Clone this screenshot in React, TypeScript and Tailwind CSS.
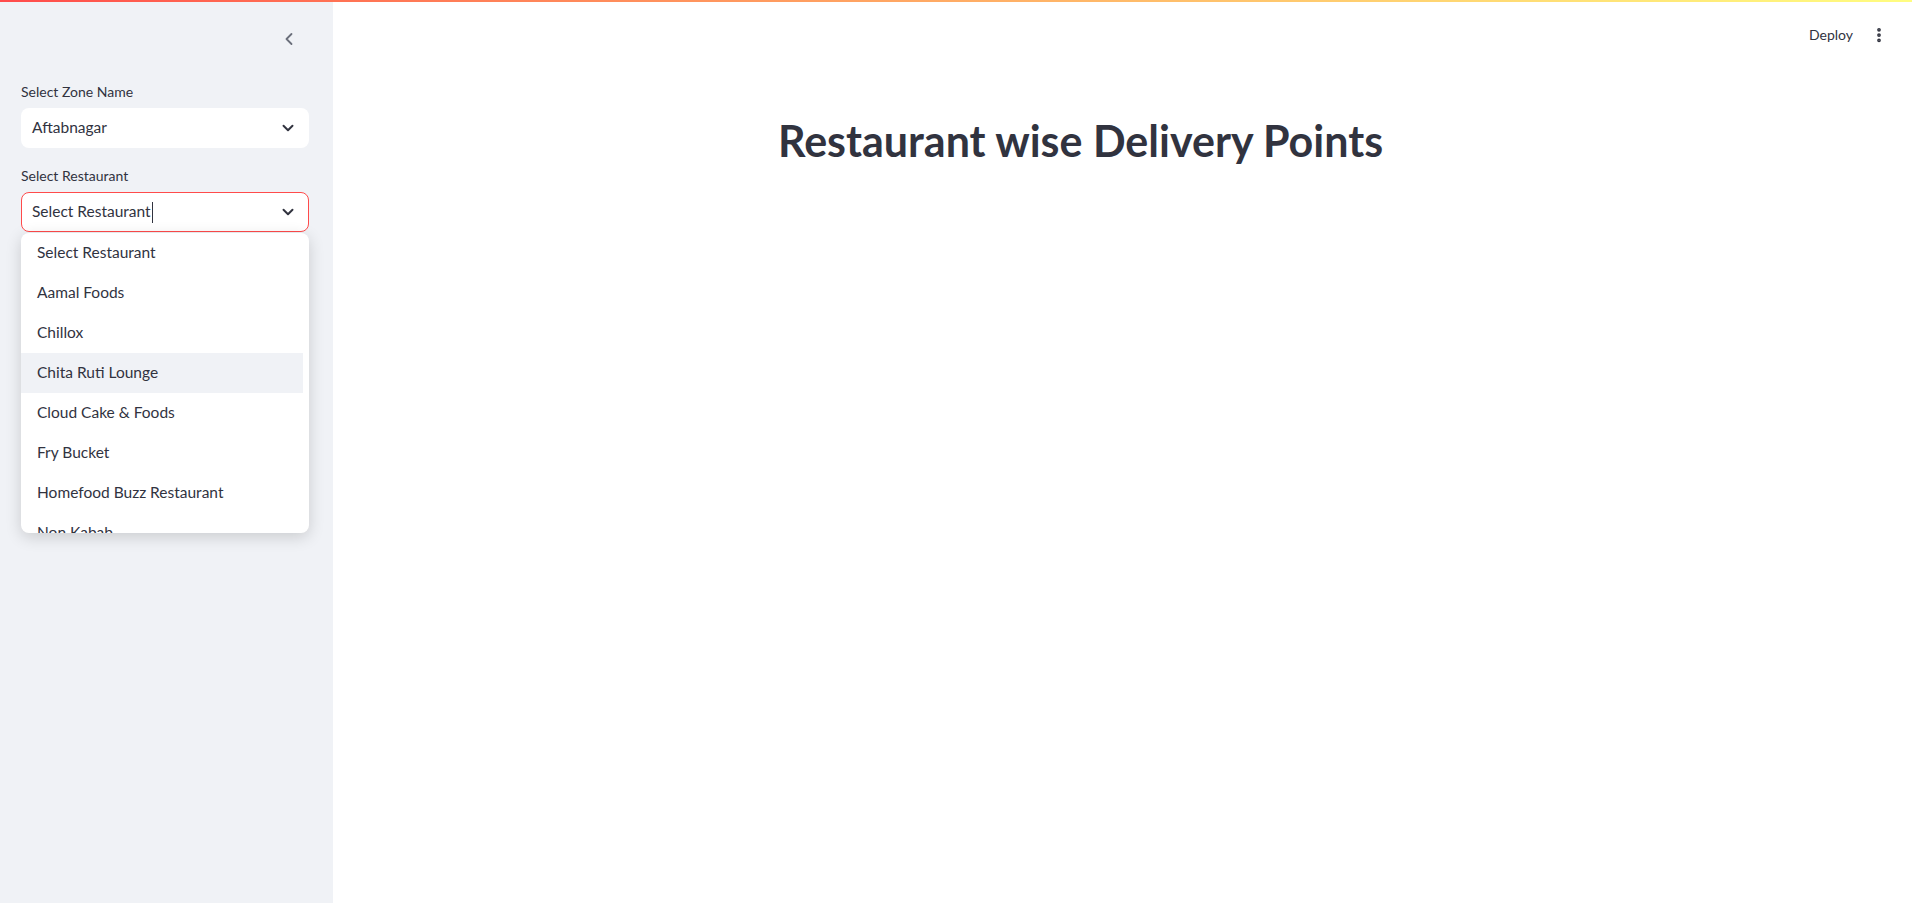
import { ChevronDown, ChevronLeft, EllipsisVertical } from 'lucide-react';

const restaurants = [
  'Select Restaurant',
  'Aamal Foods',
  'Chillox',
  'Chita Ruti Lounge',
  'Cloud Cake & Foods',
  'Fry Bucket',
  'Homefood Buzz Restaurant',
  'Non Kabab',
];

const font = { fontFamily: 'Lato, "Noto Sans", sans-serif' };

function Sidebar() {
  return (
    <aside className="w-[333px] shrink-0 bg-[#f0f2f6] pl-[21px] pr-[24px] pt-[29px] h-full">
      <div className="flex justify-end pr-[10px]">
        <ChevronLeft className="w-[20px] h-[20px] text-[#6b6f7b]" strokeWidth={2.2} />
      </div>
      <div className="mt-[33px] text-[14px] leading-[20px] text-[#31333f]">Select Zone Name</div>
      <div className="mt-[6px] h-[40px] bg-white rounded-[8px] flex items-center justify-between pl-[11px] pr-[12px] text-[15.5px] text-[#31333f]">
        <span>Aftabnagar</span>
        <ChevronDown className="w-[18px] h-[18px] text-[#31333f]" strokeWidth={2.6} />
      </div>
      <div className="mt-[18px] text-[14px] leading-[20px] text-[#31333f]">Select Restaurant</div>
      <div className="relative mt-[6px]">
        <div className="h-[40px] bg-white rounded-[8px] border border-[#ff4b4b] flex items-center justify-between pl-[10px] pr-[11px] text-[15.5px] text-[#31333f]">
          <span className="flex items-center">
            Select Restaurant
            <span className="ml-[1px] inline-block w-[1px] h-[21px] bg-[#31333f]" />
          </span>
          <ChevronDown className="w-[18px] h-[18px] text-[#31333f]" strokeWidth={2.6} />
        </div>
        <div className="absolute left-0 right-0 top-[41px] h-[300px] bg-white rounded-[8px] overflow-hidden shadow-[0_4px_16px_rgba(0,0,0,0.16)] z-10">
          <ul className="pr-[6px]">
            {restaurants.map((name, i) => (
              <li
                key={name}
                className={`h-[40px] flex items-center pl-[16px] text-[15.5px] text-[#31333f] ${i === 3 ? 'bg-[#f0f2f6]' : ''}`}
              >
                {name}
              </li>
            ))}
          </ul>
        </div>
      </div>
    </aside>
  );
}

export default function App() {
  return (
    <div className="relative w-full h-[903px] overflow-hidden bg-white flex" style={font}>
      <div className="absolute top-0 left-0 right-0 h-[2px] bg-gradient-to-r from-[#ff4b4b] to-[#fffd80] z-20" />
      <Sidebar />
      <main className="flex-1 flex flex-col">
        <header className="h-[60px] flex items-start justify-end pt-[25px] pr-[24px] gap-[17px]">
          <span className="text-[14px] leading-[20px] text-[#31333f]">Deploy</span>
          <EllipsisVertical className="w-[18px] h-[18px] mt-[1px] text-[#31333f]" strokeWidth={3} />
        </header>
        <div className="pr-[84px] pt-[53px]">
          <h1 className="text-center text-[43px] leading-[56px] font-bold text-[#31333f]">
            Restaurant wise Delivery Points
          </h1>
        </div>
      </main>
    </div>
  );
}
